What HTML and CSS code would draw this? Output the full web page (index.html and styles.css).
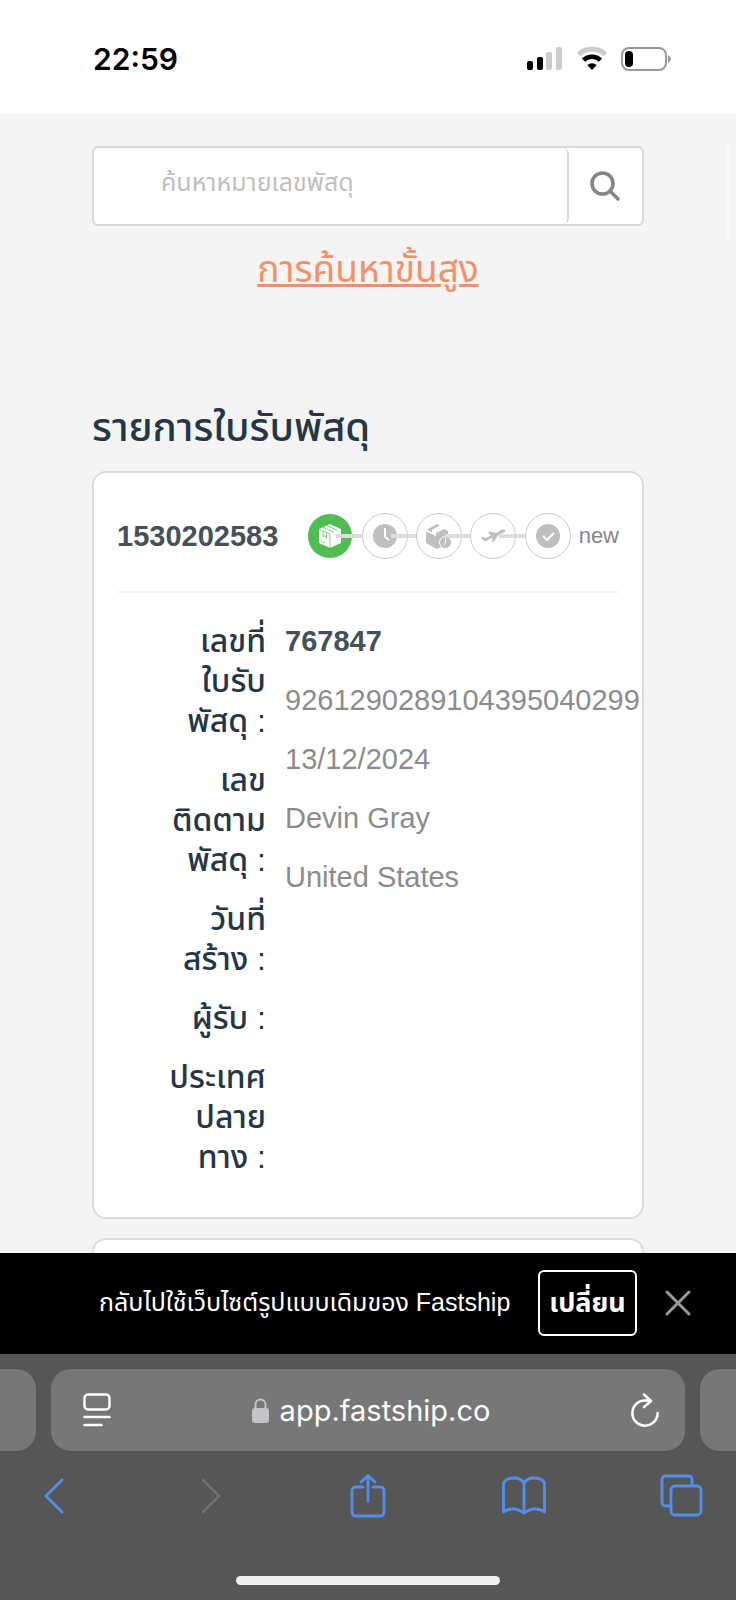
FILE: index.html
```
<!DOCTYPE html>
<html lang="th">
  <head>
    <meta charset="utf-8">
    <meta name="viewport" content="width=device-width, initial-scale=1">
    <title>Fastship</title>
    <link rel="stylesheet" href="styles.css">
  </head>
  <body>
    <div class="app">
      <header class="status-bar">
        <span class="time">22:59</span>
        <div class="status-icons">
          <svg width="36" height="24" viewBox="0 0 36 24">
            <rect x="0" y="14" width="6" height="9" rx="2" fill="#000" />
            <rect x="10" y="10" width="6" height="13" rx="2" fill="#000" />
            <rect x="19" y="5" width="6" height="18" rx="2" fill="#ccc" />
            <rect x="29" y="0" width="6" height="23" rx="2" fill="#ccc" />
          </svg>
          <svg width="30" height="24" viewBox="0 0 30 24">
            <path d="M1.5 7.5a19.5 19.5 0 0 1 27 0" fill="none" stroke="#ccc" stroke-width="5" />
            <path d="M6.5 13.2a12.3 12.3 0 0 1 17 0" fill="none" stroke="#000" stroke-width="4.6" />
            <path d="M10.3 18a7 7 0 0 1 9.4 0L15 23z" fill="#000" />
          </svg>
          <svg width="50" height="24" viewBox="0 0 50 24">
            <rect x="1" y="1" width="44" height="22" rx="7" fill="none" stroke="#999" stroke-width="2" />
            <rect x="4" y="4" width="8" height="16" rx="4" fill="#000" />
            <path d="M47 8q3 1.500 3 4t-3 4z" fill="#999" />
          </svg>
        </div>
      </header>

      <main class="page">
        <div class="side-handle"></div>
        <form class="search">
          <input class="search-input" type="text" aria-label="ค้นหาหมายเลขพัสดุ" placeholder="ค้นหาหมายเลขพัสดุ">
          <button class="search-button" type="button" aria-label="ค้นหา">
            <svg width="32" height="30" viewBox="0 0 32 30" fill="none" stroke="#858585" stroke-width="3.600" stroke-linecap="round">
              <circle cx="12.500" cy="12.500" r="10.500" />
              <path d="M20 20l8 8" />
            </svg>
          </button>
        </form>
        <a class="advanced" href="#">การค้นหาขั้นสูง</a>

        <h1 class="title">รายการใบรับพัสดุ</h1>

        <section class="card">
          <div class="card-head">
            <strong class="number">1530202583</strong>
            <ol class="steps">
              <li class="step active">
                <svg width="22" height="24" viewBox="0 0 22 24" fill="#fff">
                  <path d="M0 5L11 0l11 5v14l-11 5L0 19z" />
                  <path d="M0 5.500l11 4.500v14M4 3.200l11 5M7.500 1.600l11 5" stroke="#4fbd50" stroke-width=".7" fill="none" />
                  <path d="M4 7.500v5l1.500-1 2 3V9M2 17l4 2" stroke="#4fbd50" stroke-width=".7" fill="none" />
                </svg>
              </li>
              <li class="step">
                <svg width="24" height="24" viewBox="0 0 24 24">
                  <circle cx="12" cy="12" r="12" fill="#bfbfbf" />
                  <path d="M12 4v9l4 3" fill="none" stroke="#fff" stroke-width="2" />
                </svg>
              </li>
              <li class="step">
                <svg width="26" height="26" viewBox="0 0 26 26">
                  <path d="M0 8.500l9 4 1 1v12L0 20z" fill="#bfbfbf" />
                  <path d="M1 6.500L11 1l3 1.500L6 7v2.500z" fill="#bfbfbf" />
                  <path d="M10 10l8-4 4 2v14l-12 4z" fill="#bfbfbf" />
                  <circle cx="19.500" cy="19.500" r="6" fill="#bfbfbf" stroke="#fff" stroke-width="1" />
                  <path d="M19.500 15.500v4.500l-2 2" fill="none" stroke="#fff" stroke-width="1" />
                </svg>
              </li>
              <li class="step">
                <svg width="26" height="16" viewBox="0 0 26 16" fill="#bfbfbf">
                  <path d="M1 9.500l2-.5 3 1 5-2.500-3-3 2-1 6 1.500 4.500-2.800c2-1 5-1 5 .3S23 5 20.500 6L18 7.500l-4 6-2 1 .5-5L6 13H4z" />
                </svg>
              </li>
              <li class="step">
                <svg width="24" height="24" viewBox="0 0 24 24">
                  <circle cx="12" cy="12" r="12" fill="#bfbfbf" />
                  <path d="M7 12l4 4 7-7" fill="none" stroke="#fff" stroke-width="2" />
                </svg>
              </li>
            </ol>
            <span class="state">new</span>
          </div>

          <div class="details">
            <ul class="labels">
              <li>เลขที่<br>ใบรับ<br>พัสดุ :</li>
              <li>เลข<br>ติดตาม<br>พัสดุ :</li>
              <li>วันที่<br>สร้าง :</li>
              <li>ผู้รับ :</li>
              <li>ประเทศ<br>ปลาย<br>ทาง :</li>
            </ul>
            <ul class="values">
              <li><strong class="number">767847</strong></li>
              <li>9261290289104395040299</li>
              <li>13/12/2024</li>
              <li>Devin Gray</li>
              <li>United States</li>
            </ul>
          </div>
        </section>

        <section class="card"></section>
      </main>

      <div class="notice">
        <p class="notice-text">กลับไปใช้เว็บไซต์รูปแบบเดิมของ Fastship</p>
        <button class="switch" type="button">เปลี่ยน</button>
        <button class="close" type="button" aria-label="ปิด">
          <svg width="26" height="26" viewBox="0 0 26 26" stroke="#999" stroke-width="3" stroke-linecap="round">
            <path d="M2 2l22 22M24 2L2 24" />
          </svg>
        </button>
      </div>

      <footer class="browser">
        <div class="tabs">
          <div class="tab-edge left"></div>
          <div class="address">
            <button type="button" aria-label="Page menu">
              <svg width="28" height="34" viewBox="0 0 28 34" fill="none" stroke="#fff" stroke-width="2.400" stroke-linecap="round">
                <rect x="1.500" y="1.500" width="25" height="15" rx="3.500" />
                <path d="M1.500 24h25M1.500 32h17" />
              </svg>
            </button>
            <a class="url" href="#">
              <svg width="17" height="25" viewBox="0 0 17 25">
                <rect x="0" y="10" width="17" height="15" rx="3" fill="#c4c3c8" />
                <path d="M3.500 11V6.500a5 5 0 0 1 10 0V11" fill="none" stroke="#c4c3c8" stroke-width="2" />
              </svg>
              app.fastship.co
            </a>
            <button type="button" aria-label="Reload">
              <svg width="28" height="34" viewBox="0 0 28 34" fill="none" stroke="#fff" stroke-width="2.600" stroke-linecap="round" stroke-linejoin="round">
                <path d="M19.500 7.500H14A12.600 12.600 0 1 0 26.600 20M13 1.500l7 6.500-7 6" />
              </svg>
            </button>
          </div>
          <div class="tab-edge right"></div>
        </div>

        <nav class="toolbar">
          <button type="button" aria-label="Back">
            <svg width="20" height="44" viewBox="0 0 20 44"><path d="M18 6L2 22l16 16" /></svg>
          </button>
          <button class="disabled" type="button" aria-label="Forward">
            <svg width="20" height="44" viewBox="0 0 20 44"><path d="M2 6l16 16L2 38" /></svg>
          </button>
          <button type="button" aria-label="Share">
            <svg width="36" height="44" viewBox="0 0 36 44">
              <path d="M13 13H6q-4 0-4 4v21q0 4 4 4h24q4 0 4-4V17q0-4-4-4h-7M18 27V1.500M11 8l7-6.500L25 8" />
            </svg>
          </button>
          <button type="button" aria-label="Bookmarks">
            <svg width="44" height="44" viewBox="0 0 44 44">
              <path d="M22 9Q19 4 12 4 4 4 1.500 9v29q4-3 9.500-3t11 4q5.500-4 11-4t9.500 3V9Q40 4 32 4q-7 0-10 5zM22 9v30" />
            </svg>
          </button>
          <button type="button" aria-label="Tabs">
            <svg width="42" height="44" viewBox="0 0 42 44">
              <path d="M11 32H6q-4 0-4-4V6q0-4 4-4h22q4 0 4 4v5" />
              <rect x="11" y="12" width="30" height="29" rx="4" />
            </svg>
          </button>
        </nav>
        <div class="home-indicator"></div>
      </footer>
    </div>
  </body>
</html>
```
FILE: styles.css
```
* {
  box-sizing: border-box;
}

body {
  margin: 0;
  font-family: "Liberation Sans", "Noto Sans Thai", sans-serif;
}

ul,
ol {
  margin: 0;
  padding: 0;
  list-style: none;
}

button {
  padding: 0;
  border: 0;
  background: none;
}

svg {
  display: block;
  flex-shrink: 0;
  overflow: visible;
}

.app {
  display: flex;
  flex-direction: column;
  height: 100vh;
}

.status-bar {
  display: flex;
  justify-content: space-between;
  align-items: center;
  padding: 40px 65px 36px 93px;
}

.time {
  font: 600 30px/38px Inter, sans-serif;
}

.status-icons {
  display: flex;
  gap: 14px;
}

.page {
  position: relative;
  flex: 1;
  min-height: 0;
  overflow: hidden;
  padding: 32px 92px 0;
  background: #f4f4f4;
}

.side-handle {
  position: absolute;
  top: 28px;
  right: 6px;
  width: 4px;
  height: 100px;
  background: #fafafa;
}

.search {
  display: flex;
  height: 80px;
  border: 2px solid #d9d9d9;
  border-radius: 6px;
  background: #fff;
}

.search-input {
  flex: 1;
  min-width: 0;
  padding: 0 16px 8px 67px;
  border: 0;
  border-right: 2px solid #d9d9d9;
  border-radius: 6px;
  background: none;
  font: 25px "Liberation Sans", "Noto Sans Thai", sans-serif;
}

.search-input::placeholder {
  color: #bfbfbf;
}

.search-button {
  display: flex;
  justify-content: center;
  align-items: center;
  width: 73px;
}

.advanced {
  display: block;
  margin: 20px auto 0;
  width: fit-content;
  color: #f5906a;
  font-size: 37px;
  line-height: 48px;
}

.title {
  margin: 103px 0 14px;
  color: #253746;
  font-size: 40px;
  font-weight: 500;
  line-height: 60px;
}

.card {
  margin-bottom: 19px;
  min-height: 80px;
  padding: 0 23px 40px;
  border: 2px solid #dcdcdc;
  border-radius: 14px;
  background: #fff;
}

.card-head {
  display: flex;
  align-items: center;
  padding: 40px 0 32px;
  border-bottom: 2px solid #f4f4f4;
}

.number {
  color: #465056;
  font-size: 29px;
}

.steps {
  display: flex;
  flex: 1;
  justify-content: space-between;
  margin: 0 8px 0 29px;
}

.step {
  position: relative;
  display: flex;
  justify-content: center;
  align-items: center;
  width: 46px;
  height: 46px;
  border: 1px solid #ccc;
  border-radius: 50%;
}

.step.active {
  border-color: #fff;
  background: #4fbd50;
}

/* connector to the next step */
.step:not(:last-child)::after {
  content: "";
  position: absolute;
  top: 20px;
  left: 28px;
  width: 26px;
  height: 4px;
  background: #dcdcdc;
}

.state {
  color: #858585;
  font-size: 22px;
}

.details {
  display: flex;
  gap: 19px;
  padding-top: 28px;
  font-size: 29px;
  line-height: 40px;
}

.labels {
  display: flex;
  flex-direction: column;
  flex-shrink: 0;
  gap: 19px;
  width: 149px;
  color: #253746;
  font-size: 32px;
  font-weight: 500;
  text-align: right;
  white-space: nowrap;
}

.values {
  display: flex;
  flex-direction: column;
  gap: 19px;
  min-width: 0;
  color: #8c8c8c;
}

.notice {
  display: flex;
  align-items: center;
  padding: 17px 45px 18px 99px;
  background: #000;
}

.notice-text {
  flex: 1;
  margin: 0;
  color: #fff;
  font-size: 25px;
  white-space: nowrap;
}

.switch {
  width: 99px;
  height: 66px;
  border: 2px solid #fff;
  border-radius: 6px;
  color: #fff;
  font: bold 27px "Liberation Sans", "Noto Sans Thai", sans-serif;
}

.close {
  margin-left: 28px;
}

.browser {
  padding: 15px 0;
  background: #565656;
}

.tabs {
  display: flex;
  gap: 15px;
  height: 82px;
}

.tab-edge {
  width: 36px;
  background: #777;
}

.left {
  border-radius: 0 20px 20px 0;
}

.right {
  border-radius: 20px 0 0 20px;
}

.address {
  display: flex;
  flex: 1;
  justify-content: space-between;
  align-items: center;
  padding: 0 26px 0 32px;
  border-radius: 20px;
  background: #777;
}

.url {
  display: flex;
  align-items: center;
  gap: 11px;
  color: #fff;
  font: 29px Inter, sans-serif;
  text-decoration: none;
}

.toolbar {
  display: flex;
  justify-content: space-between;
  padding: 23px 33px 0 32px;
}

.toolbar button {
  display: flex;
  justify-content: center;
  width: 44px;
}

.toolbar svg {
  fill: none;
  stroke: #508ff0;
  stroke-width: 2.8;
  stroke-linecap: round;
  stroke-linejoin: round;
}

.toolbar .disabled svg {
  stroke: #6e6e6e;
}

.home-indicator {
  margin: 58px auto 0;
  width: 264px;
  height: 9px;
  border-radius: 5px;
  background: #f0f0f0;
}
```
